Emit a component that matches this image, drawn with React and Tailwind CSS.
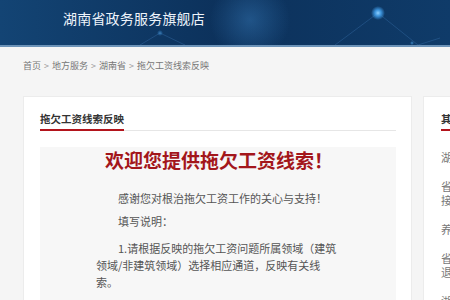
import React from 'react';

const crumbs = ['首页', '地方服务', '湖南省', '拖欠工资线索反映'];

const sideItems = [
  ['湖南省政务服务网'],
  ['省人社厅拖欠农民工', '接访与举报投诉平台'],
  ['养老保险待遇资格认证'],
  ['省人社厅社会保险', '退休人员待遇查询'],
  ['湖南省人力资源市场'],
];

const HeaderArt = () => (
  <svg className="absolute inset-0" width="450" height="45" viewBox="0 0 450 45">
    <defs>
      <radialGradient id="glow" cx="0.5" cy="0.5" r="0.5">
        <stop offset="0" stopColor="#8fd0ff" stopOpacity="1" />
        <stop offset="0.45" stopColor="#3f9be6" stopOpacity="0.9" />
        <stop offset="1" stopColor="#3f9be6" stopOpacity="0" />
      </radialGradient>
      <radialGradient id="soft" cx="0.5" cy="0.5" r="0.5">
        <stop offset="0" stopColor="#3e86c8" stopOpacity="0.4" />
        <stop offset="1" stopColor="#3e86c8" stopOpacity="0" />
      </radialGradient>
    </defs>
    <circle cx="250" cy="20" r="40" fill="url(#soft)" />
    <g stroke="#4d8ccc" strokeOpacity="0.35" strokeWidth="0.8" fill="none">
      <path d="M378 13 L335 45" />
      <path d="M378 13 L418 45" />
      <path d="M160 33 L140 45" />
      <path d="M160 33 L185 45" />
      <path d="M418 45 L440 38" />
    </g>
    <circle cx="378" cy="13" r="7" fill="url(#glow)" />
    <circle cx="160" cy="33" r="3" fill="url(#glow)" opacity="0.4" />
    <circle cx="412" cy="43" r="2" fill="url(#glow)" opacity="0.5" />
  </svg>
);

export default function App() {
  return (
    <div
      className="w-[450px] h-[300px] overflow-hidden bg-[#f5f5f5]"
      style={{ fontFamily: '"Noto Sans CJK SC", "Noto Sans", sans-serif' }}
    >
      {/* Header */}
      <div className="relative h-[47px] border-b-2 border-[#6c93b8] bg-gradient-to-r from-[#134474] via-[#0c315b] to-[#0f3b69] overflow-hidden">
        <HeaderArt />
        <div className="relative pl-[63px] pb-[8px] h-[45px] flex items-center text-[14px] text-[#eef4fb] tracking-[0.2px]">
          湖南省政务服务旗舰店
        </div>
      </div>

      {/* Breadcrumb */}
      <div className="pl-[23px] pt-[12px] h-[49px] flex items-start text-[9px] leading-[14px] text-[#777]">
        {crumbs.map((c, i) => (
          <span key={c} className="flex">
            {i > 0 && <span className="px-[3px] text-[#999]">&gt;</span>}
            {c}
          </span>
        ))}
      </div>

      {/* Content row */}
      <div className="flex gap-[11px] pl-[23px]">
        {/* Main card */}
        <div className="w-[389px] shrink-0 bg-white border border-[#ececec] pl-[16px] pr-[15px] pt-[14px]">
          <div className="border-b border-[#e6e6e6] flex">
            <span className="text-[10.5px] leading-[16px] font-bold text-[#333] pb-[2px] border-b-2 border-[#b3141c] -mb-px">
              拖欠工资线索反映
            </span>
          </div>

          <div className="mt-[16px] bg-[#f7f7f7] h-[200px]">
            <h1 className="text-center text-[19px] leading-[26px] font-bold text-[#a3161b] pl-[2px]">
              欢迎您提供拖欠工资线索！
            </h1>
            <div className="pl-[56px] pr-[57px] mt-[17px] text-[11px] leading-[17px] text-[#555]">
              <p className="indent-[2em] mb-[6px]">感谢您对根治拖欠工资工作的关心与支持！</p>
              <p className="indent-[2em] mb-[10px]">填写说明：</p>
              <p className="indent-[2em] mb-[7px]">
                1.请根据反映的拖欠工资问题所属领域（建筑领域/非建筑领域）选择相应通道，反映有关线索。
              </p>
              <p className="indent-[2em]">
                2.请如实填写相关信息，以便我们及时核查处理。
              </p>
            </div>
          </div>
        </div>

        {/* Side card */}
        <div className="w-[200px] shrink-0 bg-white border border-[#ececec] pl-[17px] pt-[14px]">
          <div className="flex">
            <span className="text-[10.5px] leading-[16px] font-bold text-[#333] pb-[2px] border-b-2 border-[#b3141c]">
              其他服务
            </span>
          </div>
          <ul className="mt-[19px] flex flex-col gap-[15px] text-[11px] leading-[14px] text-[#777]">
            {sideItems.map((lines) => (
              <li key={lines[0]}>
                {lines.map((l) => (
                  <div key={l}>{l}</div>
                ))}
              </li>
            ))}
          </ul>
        </div>
      </div>
    </div>
  );
}
